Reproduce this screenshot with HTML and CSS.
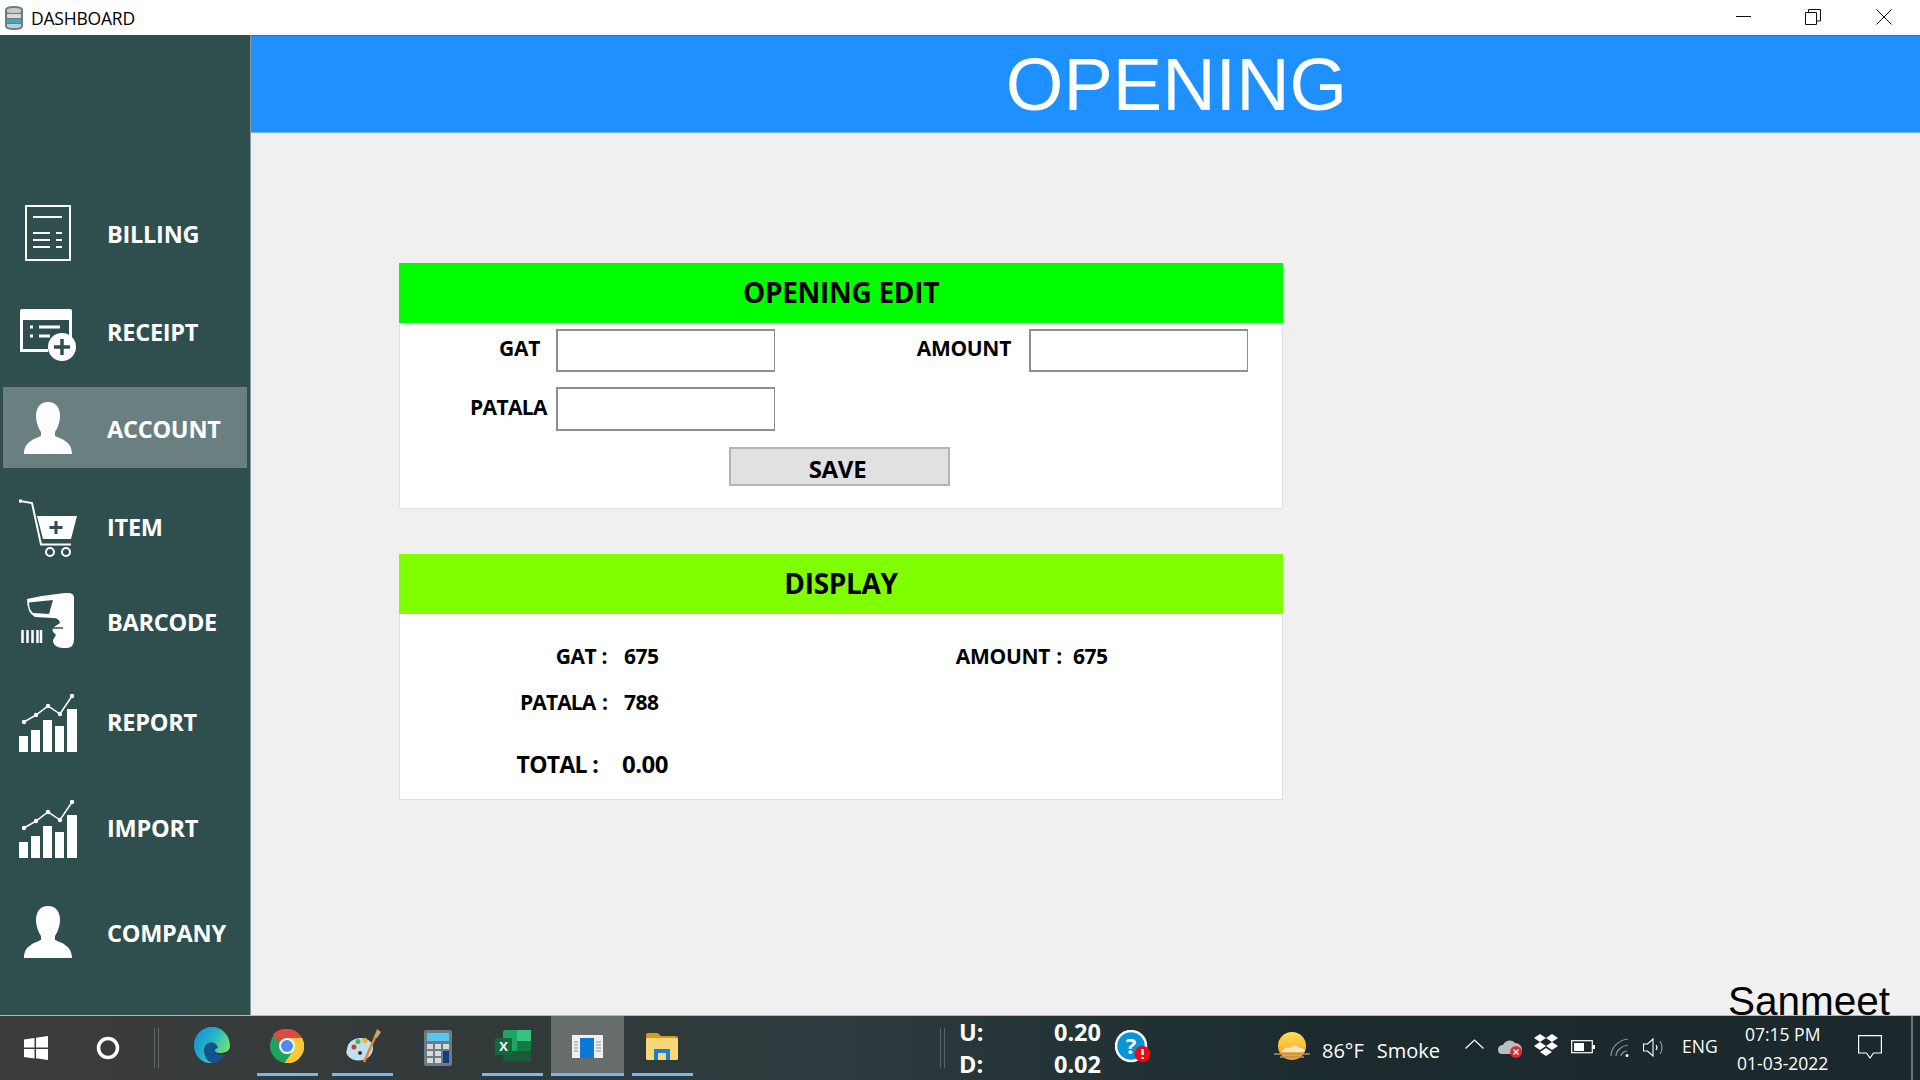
FILE: index.html
```html
<!DOCTYPE html>
<html lang="en">
<head>
<meta charset="utf-8">
<title>DASHBOARD</title>
<link rel="stylesheet" href="styles.css">
</head>
<body>
<div class="window">
  <header class="titlebar">
    <svg class="app-icon" width="18" height="24" viewBox="0 0 18 24">
      <path d="M0 4Q0 0 9 0Q18 0 18 4V20Q18 24 9 24Q0 24 0 20Z" fill="#6f7b80"/>
      <path d="M2 4Q2 2 9 2Q16 2 16 4V6Q16 7 9 7Q2 7 2 6Z" fill="#c3cbcf"/>
      <rect x="2" y="8" width="14" height="4" rx="1" fill="#d6dbdd"/>
      <rect x="2" y="13" width="14" height="4" rx="1" fill="#3fa7b5"/>
      <path d="M2 18H16V20Q16 22 9 22Q2 22 2 20Z" fill="#c3cbcf"/>
    </svg>
    <span class="title-text">DASHBOARD</span>
    <div class="win-controls">
      <svg width="16" height="16" viewBox="0 0 16 16"><path d="M0 7.500H15" stroke="#111" fill="none"/></svg>
      <svg class="restore" width="16" height="16" viewBox="0 0 16 16"><path d="M.5 3.500H11.500V15.500H.5ZM3.500 3.500V.5H15.500V12H11.500" stroke="#111" fill="none"/></svg>
      <svg width="16" height="16" viewBox="0 0 16 16"><path d="M.5.5L15.500 15.500M15.500.5L.5 15.500" stroke="#111" fill="none"/></svg>
    </div>
  </header>

  <div class="app">
    <nav class="sidebar">
      <a class="nav-item">
        <span class="nav-icon lift"><svg width="46" height="56" viewBox="0 0 46 56"><rect x="1" y="1" width="44" height="54" fill="none" stroke="#fff" stroke-width="2"/><path d="M8 12H37M8 28H25M8 35H25M8 42H25M31 28H37M31 35H37M31 42H37" stroke="#fff" stroke-width="2" fill="none"/></svg></span>
        <span class="nav-label">BILLING</span>
      </a>
      <a class="nav-item gap-17">
        <span class="nav-icon drop"><svg width="56" height="52" viewBox="0 0 56 52"><path d="M2 0H50Q52 0 52 2V30H49V11H3V40H28V43H0V2Q0 0 2 0Z" fill="#fff"/><path d="M10 18H13M10 27H13M19 18H40M19 27H30" stroke="#fff" stroke-width="3" fill="none"/><circle cx="42" cy="38" r="14" fill="#fff"/><path d="M42 30V46M34 38H50" stroke="#2f4f4f" stroke-width="3.500" fill="none"/></svg></span>
        <span class="nav-label">RECEIPT</span>
      </a>
      <a class="nav-item gap-14 active">
        <span class="nav-icon"><svg width="48" height="52" viewBox="0 0 48 52"><use href="#user"/></svg></span>
        <span class="nav-label shift">ACCOUNT</span>
      </a>
      <a class="nav-item gap-19">
        <span class="nav-icon"><svg width="58" height="60" viewBox="0 0 58 60"><path d="M1 3L13 5L22 46.500H52" fill="none" stroke="#fff" stroke-width="2"/><circle cx="1.500" cy="3" r="1.800" fill="#fff"/><path d="M18 18H58L52 41H24Z" fill="#fff"/><path d="M37 23V36M30.500 29.500H43.500" stroke="#2f4f4f" stroke-width="3" fill="none"/><circle cx="31" cy="54" r="4" fill="none" stroke="#fff" stroke-width="2"/><circle cx="47" cy="54" r="4" fill="none" stroke="#fff" stroke-width="2"/></svg></span>
        <span class="nav-label">ITEM</span>
      </a>
      <a class="nav-item gap-14">
        <span class="nav-icon lift"><svg width="54" height="56" viewBox="0 0 54 56"><path d="M6 6Q24 2 44 0Q53 -1 53 5V46Q53 56 44 55Q32 55 32 47L35 42L33 40Q30 37 33 34L39 30Q38 25 32 25L14 24Q6 20 6 6Z" fill="#fff"/><path d="M8 9.500L32 7L28 21L12 20Q8 17 8 9.500Z" fill="#2f4f4f"/><path d="M32 35H42" stroke="#2f4f4f" stroke-width="1.500" fill="none"/><path d="M1.500 37V50M6.500 37V50M11.500 37V50M16.500 37V50M20 37V50" stroke="#fff" stroke-width="2.500" fill="none"/></svg></span>
        <span class="nav-label">BARCODE</span>
      </a>
      <a class="nav-item gap-19">
        <span class="nav-icon"><svg width="58" height="58" viewBox="0 0 58 58"><use href="#chart"/></svg></span>
        <span class="nav-label">REPORT</span>
      </a>
      <a class="nav-item gap-25">
        <span class="nav-icon"><svg width="58" height="58" viewBox="0 0 58 58"><use href="#chart"/></svg></span>
        <span class="nav-label">IMPORT</span>
      </a>
      <a class="nav-item gap-24">
        <span class="nav-icon lift"><svg width="48" height="52" viewBox="0 0 48 52"><use href="#user"/></svg></span>
        <span class="nav-label">COMPANY</span>
      </a>
    </nav>

    <main class="main">
      <div class="page-header"><h1 class="page-title">OPENING</h1></div>
      <div class="content">
        <section class="card">
          <h2 class="card-head head-edit">OPENING EDIT</h2>
          <div class="edit-grid">
            <label class="field-label pad-16">GAT</label>
            <input class="field" type="text">
            <label class="field-label pad-18">AMOUNT</label>
            <input class="field" type="text">
            <label class="field-label pad-9 tight">PATALA</label>
            <input class="field" type="text">
            <button class="save-btn" type="button">SAVE</button>
          </div>
        </section>
        <section class="card second">
          <h2 class="card-head head-display">DISPLAY</h2>
          <div class="display-grid">
            <span class="d-label left">GAT :</span><span class="d-value">675</span>
            <span class="d-label wide">AMOUNT :</span><span class="d-value tuck">675</span>
            <span class="d-label left tight">PATALA :</span><span class="d-value">788</span>
            <span></span><span></span>
            <span class="d-label total-label">TOTAL :</span><span class="d-value total-value">0.00</span>
          </div>
        </section>
        <div class="brand">Sanmeet</div>
      </div>
    </main>
  </div>

  <footer class="taskbar">
    <svg class="tb-start" width="24" height="24" viewBox="0 0 24 24"><path d="M0 3.500L10.500 2V11.500H0ZM12 1.800L24 0V11.500H12ZM0 13H10.500V22.500L0 21ZM12 13H24V24L12 22.300Z" fill="#fff"/></svg>
    <svg class="tb-search" width="24" height="24" viewBox="0 0 24 24"><circle cx="12" cy="12" r="9.500" fill="none" stroke="#fff" stroke-width="3.500"/></svg>
    <span class="tb-sep first"></span>
    <svg class="tb-edge" width="36" height="36" viewBox="0 0 36 36">
      <defs>
        <linearGradient id="eg1" x1="0" y1="0" x2="1" y2="0.500"><stop offset="0" stop-color="#0f8fd8"/><stop offset=".55" stop-color="#27b3c9"/><stop offset="1" stop-color="#6fe36c"/></linearGradient>
      </defs>
      <path d="M18 0C28 0 36 8 36 19C36 24 31 26 26 26C20 26 19 22 22 19C20 15 15 15 12 18C8 23 11 32 19 36C8 37 0 29 0 18C0 8 8 0 18 0Z" fill="url(#eg1)"/>
      <path d="M11 20C14 13 23 15 24 21C19 22 19 27 25 28C28 28.500 31 28 32 27C28 33 22 36 18 36C12 34 9 27 11 20Z" fill="#11548f"/>
    </svg>
    <div class="task running chrome-slot">
      <svg width="34" height="34" viewBox="0 0 34 34">
        <circle cx="17" cy="17" r="17" fill="#1fa35c"/>
        <path d="M17 0A17 17 0 0 1 32 9H17A8 8 0 0 0 9.500 14L3 5.500A17 17 0 0 1 17 0Z" fill="#dd4b3e"/>
        <path d="M32 9A17 17 0 0 1 14.500 34L23 22A8 8 0 0 0 17 9Z" fill="#fbc935"/>
        <circle cx="17" cy="17" r="8" fill="#fff"/><circle cx="17" cy="17" r="6" fill="#4c8bf5"/>
      </svg>
    </div>
    <div class="task running">
      <svg width="36" height="36" viewBox="0 0 36 36">
        <path d="M2 21C3 12 13 8 21 11C29 14 30 22 25 28C19 34 8 34 3 28C1 26 1 24 2 21Z" fill="#bfe0f2"/>
        <circle cx="9" cy="19" r="2.500" fill="#d9332e"/><circle cx="13" cy="13.500" r="2.500" fill="#4caf50"/><circle cx="20" cy="12.500" r="2.500" fill="#f3b12b"/><circle cx="15" cy="25" r="2" fill="#333"/>
        <path d="M19 34L31 7" stroke="#e08a2c" stroke-width="2.500" fill="none"/><path d="M29 9L32 1L36 4L32 10Z" fill="#c9a36a"/>
      </svg>
    </div>
    <div class="task">
      <svg width="28" height="36" viewBox="0 0 28 36">
        <rect width="28" height="36" rx="2" fill="#6e7a84"/><rect x="3" y="3" width="22" height="8" fill="#55c8ee"/>
        <rect x="3" y="14" width="6" height="5" fill="#d5dadd"/><rect x="11" y="14" width="6" height="5" fill="#d5dadd"/><rect x="19" y="14" width="6" height="5" fill="#d5dadd"/>
        <rect x="3" y="21" width="6" height="5" fill="#d5dadd"/><rect x="11" y="21" width="6" height="5" fill="#d5dadd"/>
        <rect x="3" y="28" width="6" height="5" fill="#d5dadd"/><rect x="11" y="28" width="6" height="5" fill="#d5dadd"/><rect x="19" y="21" width="6" height="12" fill="#123f7f"/>
      </svg>
    </div>
    <div class="task running">
      <svg width="36" height="32" viewBox="0 0 36 32">
        <rect x="8" y="0" width="28" height="32" rx="2" fill="#21a366"/><rect x="22" y="0" width="14" height="11" fill="#33c481"/><rect x="22" y="11" width="14" height="10" fill="#107c41"/><rect x="8" y="21" width="28" height="11" fill="#185c37"/>
        <rect x="0" y="8" width="17" height="17" rx="1" fill="#0f6b3b"/><text class="xl" x="8.500" y="21">X</text>
      </svg>
    </div>
    <div class="task running current">
      <svg width="31" height="23" viewBox="0 0 31 23">
        <rect width="31" height="23" fill="#eef0f1"/><rect x="8" y="3" width="14" height="20" fill="#0c78d8"/>
        <path d="M2 7H6M2 10H6M2 13H6M2 16H6M24 7H29M24 10H29M24 13H29M24 16H29" stroke="#8c9499" stroke-width="1.200" fill="none"/>
      </svg>
    </div>
    <div class="task running">
      <svg width="32" height="27" viewBox="0 0 32 27">
        <path d="M0 2Q0 0 2 0H12L15 3H29Q32 3 32 5V10H0Z" fill="#d99a1c"/><rect x="0" y="5" width="32" height="22" rx="1.500" fill="#f8d775"/>
        <path d="M8 27V16H24V27H20V20H12V27Z" fill="#1a7fd1"/>
      </svg>
    </div>

    <span class="tb-sep second"></span>
    <div class="speed">
      <span class="sp-key">U:</span><span class="sp-val">0.20</span>
      <span class="sp-key">D:</span><span class="sp-val">0.02</span>
    </div>
    <svg class="tb-help" width="36" height="36" viewBox="0 0 36 36">
      <circle cx="16" cy="16" r="15" fill="#0a94d6" stroke="#fff" stroke-width="2.500"/>
      <text class="help-q" x="16" y="24">?</text>
      <circle cx="27.500" cy="24" r="8" fill="#ee0a14"/><path d="M27.500 19V25M27.500 27V29" stroke="#fff" stroke-width="2.500" fill="none"/>
    </svg>
    <svg class="tb-weather" width="36" height="30" viewBox="0 0 36 30">
      <defs><linearGradient id="sun" x1="0" y1="0" x2="0" y2="1"><stop offset="0" stop-color="#ffdc5a"/><stop offset="1" stop-color="#f5a118"/></linearGradient></defs>
      <circle cx="18" cy="14" r="14" fill="url(#sun)"/>
      <path d="M7 20Q11 14 16 16Q20 11 26 16Q31 16 31 20Z" fill="#f1e3cf"/>
      <path d="M0 22H36M6 25H30" stroke="#b7906a" stroke-width="1.500" fill="none"/>
    </svg>
    <span class="weather-text">86°F</span>
    <span class="weather-text smoke">Smoke</span>

    <svg class="tray chevron" width="19" height="10" viewBox="0 0 19 10"><path d="M.5 9.500L9.500 1L18.500 9.500" fill="none" stroke="#fff" stroke-width="1.200"/></svg>
    <svg class="tray cloud" width="25" height="20" viewBox="0 0 25 20">
      <path d="M0 12C0 8 3 7 5 7C7 2 14 1 17 5C21 5 24 8 24 12C24 15 21 16 18 16H4C2 16 0 15 0 12Z" fill="#b9bfc1"/>
      <circle cx="18" cy="14" r="6" fill="#de2a34"/><path d="M15.500 11.500L20.500 16.500M20.500 11.500L15.500 16.500" stroke="#fff" stroke-width="1.300" fill="none"/>
    </svg>
    <svg class="tray dropbox" width="24" height="22" viewBox="0 0 24 22"><path d="M6 0L12 4L6 8L0 4ZM18 0L24 4L18 8L12 4ZM6 8L12 12L6 16L0 12ZM18 8L24 12L18 16L12 12ZM12 14L18 18L12 22L6 18Z" fill="#fff"/></svg>
    <svg class="tray battery" width="24" height="14" viewBox="0 0 24 14"><rect x=".7" y=".7" width="20.600" height="12" fill="none" stroke="#fff" stroke-width="1.200"/><rect x="3" y="3" width="10" height="8" fill="#fff"/><rect x="22" y="5" width="2" height="4" fill="#fff"/></svg>
    <svg class="tray wifi" width="19" height="19" viewBox="0 0 19 19"><path d="M1 18C1 10 8 2 18 1M6 18C6 13 11 8 18 7M11 18C11 16 14 13 17 13" fill="none" stroke="#8f9699" stroke-width="1.200"/><circle cx="17" cy="17.500" r="1.500" fill="#fff"/></svg>
    <svg class="tray volume" width="23" height="19" viewBox="0 0 23 19"><path d="M.5 6H4.500L10 1V18L4.500 13H.5Z" fill="none" stroke="#fff" stroke-width="1.100"/><path d="M13 7Q15 9.500 13 12" fill="none" stroke="#fff" stroke-width="1.100"/><path d="M17 3Q21 9.500 17 16" fill="none" stroke="#8f9699" stroke-width="1.100"/></svg>
    <span class="lang">ENG</span>
    <div class="clock"><span>07:15 PM</span><span>01-03-2022</span></div>
    <svg class="tray notify" width="24" height="24" viewBox="0 0 24 24"><path d="M.6.6H23.400V18H15.500L12 23L8.500 18H.6Z" fill="none" stroke="#fff" stroke-width="1.200"/></svg>
    <span class="show-desktop"></span>
  </footer>
</div>

<svg class="defs" width="0" height="0" aria-hidden="true">
  <symbol id="user" viewBox="0 0 48 52">
    <path d="M24 0C32 0 36 6 36 14C36 21 33 27 31 30V34C38 37 48 40 48 52H0C0 40 10 37 17 34V30C15 27 12 21 12 14C12 6 16 0 24 0Z" fill="#fff"/>
  </symbol>
  <symbol id="chart" viewBox="0 0 58 58">
    <path d="M0 42H9V58H0ZM12 36H21V58H12ZM24 26H33V58H24ZM36 32H45V58H36ZM48 15H58V58H48Z" fill="#fff"/>
    <path d="M5 28L17 21L29 12L41 20L53 2" fill="none" stroke="#fff" stroke-width="1.500"/>
    <g fill="#fff"><circle cx="5" cy="28" r="2.200"/><circle cx="17" cy="21" r="2.200"/><circle cx="29" cy="12" r="2.200"/><circle cx="41" cy="20" r="2.200"/><circle cx="53" cy="2" r="2.200"/></g>
  </symbol>
</svg>
</body>
</html>
```

FILE: styles.css
```css
* { box-sizing: border-box; }
html, body { margin: 0; height: 100%; overflow: hidden; }
body { font-family: "Open Sans", "Noto Sans", sans-serif; color: #000; }
svg { display: block; flex: none; }
.defs { position: absolute; }

.window { display: flex; flex-direction: column; width: 1920px; height: 1080px; overflow: hidden; }

/* title bar */
.titlebar { flex: none; height: 35px; background: #fff; display: flex; align-items: center; }
.app-icon { margin-left: 5px; }
.title-text { margin-left: 8px; font-size: 17.500px; letter-spacing: -.2px; }
.win-controls { margin-left: auto; margin-top: -2px; display: flex; gap: 54px; padding-right: 28px; }
.restore { margin: 0 1px 0 -1px; }

/* body */
.app { flex: 1; display: flex; min-height: 0; }
.sidebar { flex: none; width: 251px; background: #2f4f4f; padding: 159px 0 0 3px; border-right: 1px solid #8a9a9a; }
.nav-item { display: flex; align-items: center; width: 244px; height: 81px; color: #fff; }
.nav-item.active { background: #6a7f7f; }
.gap-14 { margin-top: 14px; }
.gap-17 { margin-top: 17px; }
.gap-19 { margin-top: 19px; }
.gap-24 { margin-top: 24px; }
.gap-25 { margin-top: 25px; }
.nav-icon { width: 90px; display: flex; justify-content: center; }
.nav-icon.lift { margin-bottom: 4px; }
.nav-icon.drop { margin-top: 4px; }
.nav-label { margin-left: 14px; margin-top: -1px; font-size: 23.500px; font-weight: 700; letter-spacing: -.25px; }
.nav-label.shift { padding-top: 4px; }

.main { flex: 1; min-width: 0; display: flex; flex-direction: column; }
.page-header { flex: none; height: 98px; background: #1e90ff; border-top: 1px solid #1878d8; border-bottom: 1px solid #6db3f5; display: flex; align-items: center; justify-content: center; padding: 2px 0 0 182px; }
.page-title { margin: 0; font-family: "Liberation Sans", Arial, sans-serif; font-weight: 400; font-size: 74px; color: #fff; line-height: 1; }

.content { flex: 1; min-height: 0; background: #f0f0f0; padding: 130px 0 0 148px; display: flex; flex-direction: column; }
.card { flex: none; width: 884px; height: 246px; background: #fff; border: 1px solid #dde2e8; border-top: 0; }
.card.second { margin-top: 45px; }
.card-head { margin: 0 -1px; height: 60px; display: flex; align-items: center; justify-content: center; padding-bottom: 3px; font-size: 28px; font-weight: 700; letter-spacing: -.3px; }
.head-edit { background: #00ff00; }
.head-display { background: #7fff00; }

.edit-grid { display: grid; grid-template-columns: 156px 219px 254px 219px; grid-template-rows: 43px 44px 39px; row-gap: 15px; padding-top: 6px; align-items: center; }
.field-label { justify-self: end; font-size: 21px; font-weight: 700; letter-spacing: -.3px; margin-top: -5px; }
.field-label.tight { letter-spacing: -.6px; }
.pad-9 { padding-right: 9px; }
.pad-16 { padding-right: 16px; }
.pad-18 { padding-right: 18px; }
.field { width: 219px; height: 100%; margin: 0; padding: 0 4px; background: #fff; border: 2px solid #8f8f8f; border-right-width: 1px; border-radius: 0; }
.save-btn { grid-column: 1 / -1; grid-row: 3; width: 221px; height: 39px; margin: 1px 0 0 329px; padding: 3px 4px 0 0; background: #e1e1e1; border: 2px solid #b5b5b5; border-radius: 0; font-family: inherit; font-size: 24px; font-weight: 700; letter-spacing: -.3px; color: #000; }

.display-grid { display: grid; grid-template-columns: 211px 60px 366px 60px; grid-auto-rows: 30px; column-gap: 13px; row-gap: 16px; padding-top: 27px; align-items: center; }
.d-label { justify-self: end; font-size: 21px; font-weight: 700; letter-spacing: -.4px; white-space: nowrap; }
.d-label.left { padding-right: 4px; }
.d-label.tight { letter-spacing: -.9px; word-spacing: 2px; }
.d-label.wide { word-spacing: 1px; padding-right: 1px; letter-spacing: -.3px; }
.d-value { font-size: 21px; font-weight: 700; letter-spacing: -.5px; }
.d-value.tuck { margin-left: -3px; }
.total-label { font-size: 23px; padding-right: 13px; margin-top: 31px; letter-spacing: -.7px; }
.total-value { font-size: 24px; margin: 31px 0 0 -2px; letter-spacing: -.5px; }

.brand { margin-top: auto; padding-right: 30px; align-self: flex-end; font-family: "Liberation Sans", Arial, sans-serif; font-size: 40.500px; line-height: 44px; margin-bottom: -8px; }

/* task bar */
.taskbar { position: relative; z-index: 1; flex: none; height: 65px; display: flex; align-items: center; color: #fff; border-top: 1px solid #b5b8b8; background: linear-gradient(90deg, #3b3c3b 0, #323939 25%, #2d3b3e 44%, #1c2b2e 68%, #1b282c 100%); }
.tb-start { margin-left: 24px; }
.tb-search { margin-left: 48px; }
.tb-sep { flex: none; width: 5px; height: 40px; border-left: 1px solid #5c6363; border-right: 1px solid #5c6363; }
.tb-sep.first { margin-left: 34px; }
.tb-edge { margin-left: 35px; margin-top: -6px; }
.task { flex: none; align-self: flex-start; width: 61px; height: 60px; margin-left: 14px; padding-top: 3px; display: flex; justify-content: center; align-items: center; }
.chrome-slot { margin-left: 27px; padding-right: 2px; }
.task.current { width: 73px; margin-left: 8px; background: #676d6b; }
.task.current + .task { margin-left: 8px; padding-right: 2px; }
.task.running { border-bottom: 3px solid #76b9ed; }
.xl { font-family: "Open Sans", sans-serif; font-size: 13px; font-weight: 700; fill: #fff; text-anchor: middle; }
.help-q { font-family: "Open Sans", sans-serif; font-size: 22px; font-weight: 700; fill: #fff; text-anchor: middle; }

.tb-sep.second { margin-left: 247px; }
.speed { display: grid; grid-template-columns: 94px 48px; grid-auto-rows: 31px; row-gap: 1px; margin-left: 14px; font-size: 23.500px; font-weight: 700; line-height: 31px; }
.sp-val { text-align: right; }
.tb-help { margin-left: 14px; }
.tb-weather { margin-left: 123px; margin-top: -2px; }
.weather-text { font-size: 20px; margin-left: 12px; margin-top: 4px; }
.weather-text.smoke { margin-left: 13px; }
.tray { margin-top: -6px; }
.chevron { margin-left: 25px; margin-top: -8px; }
.cloud { margin-left: 14px; margin-top: -1px; }
.dropbox { margin-left: 11px; margin-top: -6px; }
.battery { margin-left: 13px; margin-top: -3px; }
.wifi { margin-left: 15px; margin-top: -1px; }
.volume { margin-left: 14px; margin-top: -1px; }
.lang { margin-left: 16px; font-size: 17.500px; margin-top: -5px; }
.clock { margin-left: 17px; width: 96px; display: flex; flex-direction: column; align-items: center; gap: 5px; font-size: 17.500px; line-height: 24px; margin-top: 1px; }
.notify { margin-left: 27px; margin-top: -3px; }
.show-desktop { flex: none; width: 2px; height: 64px; margin-left: 29px; background: #6e7476; }
```
